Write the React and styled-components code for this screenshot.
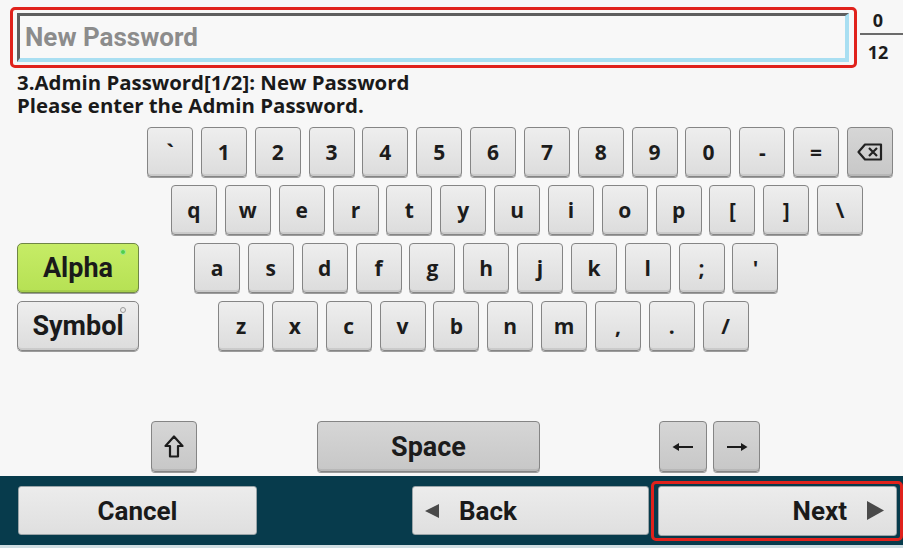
import React from 'react';
import styled, { createGlobalStyle } from 'styled-components';

const GlobalStyle = createGlobalStyle`
  html, body {
    margin: 0;
    padding: 0;
    background: #f7f7f7;
  }
  body {
    font-family: Roboto, 'Liberation Sans', sans-serif;
    color: #1c1c1c;
  }
`;

const Screen = styled.div`
  width: 903px;
  height: 548px;
  background: #f7f7f7;
  display: flex;
  flex-direction: column;
  overflow: hidden;
`;

const Header = styled.div`
  display: flex;
  align-items: flex-start;
  margin-top: 7px;
  padding-left: 10px;
`;

const FocusRing = styled.div`
  width: 847px;
  height: 61px;
  box-sizing: border-box;
  border: 3px solid #e0221c;
  border-radius: 5px;
  padding: 3px 5px 3px 4px;
`;

const Field = styled.div`
  height: 100%;
  box-sizing: border-box;
  background: #f8f8f8;
  border-top: 3px solid #5e5e5e;
  border-left: 3px solid #5e5e5e;
  border-right: 4px solid #a9dff2;
  border-bottom: 4px solid #a9dff2;
  display: flex;
  align-items: center;
  padding-left: 5px;
  font-weight: 700;
  font-size: 26px;
  color: #8c8c8c;
`;

const Counter = styled.div`
  width: 43px;
  margin-left: 3px;
  padding-top: 3px;
  padding-right: 7px;
  box-sizing: border-box;
  display: flex;
  flex-direction: column;
  align-items: center;
  font-family: 'Open Sans', Roboto, sans-serif;
  font-weight: 700;
  font-size: 18px;
  line-height: 20px;
`;

const Divider = styled.div`
  align-self: stretch;
  height: 1.5px;
  background: #6a6a6a;
  margin: 3px -7px 7px 0;
`;

const Info = styled.div`
  margin-top: 3px;
  padding-left: 17px;
  font-family: 'Open Sans', Roboto, sans-serif;
  font-weight: 700;
  font-size: 20.4px;
  line-height: 23px;
  color: #1a1a1a;
`;

const Keyboard = styled.div`
  margin-top: 10px;
  padding-left: 17px;
  display: flex;
  flex-direction: column;
  gap: 8px;
`;

const Row = styled.div`
  display: flex;
  height: 50px;
`;

const ModeSlot = styled.div`
  width: 122px;
  flex-shrink: 0;
`;

const KeyGroup = styled.div`
  display: flex;
  gap: 7.85px;
  margin-left: ${p => p.$indent}px;
`;

const Key = styled.div`
  width: ${p => p.$w || 46}px;
  height: 100%;
  box-sizing: border-box;
  flex-shrink: 0;
  border: 1px solid #858585;
  border-radius: 4px;
  background: ${p => p.$dark
    ? 'linear-gradient(#d6d6d6, #c7c7c7)'
    : 'linear-gradient(#eeeeee, #dcdcdc)'};
  box-shadow: inset 0 -2px 0 rgba(0, 0, 0, 0.08), 0 1px 0 #9c9c9c;
  display: flex;
  align-items: center;
  justify-content: center;
  font-family: 'Open Sans', 'DejaVu Sans', sans-serif;
  font-weight: 700;
  font-size: 21px;
  color: #1c1c1c;
`;

const ModeButton = styled.div`
  position: relative;
  width: 122px;
  height: 50px;
  box-sizing: border-box;
  border: 1px solid ${p => p.$active ? '#6f8646' : '#858585'};
  border-radius: 5px;
  background: ${p => p.$active
    ? 'linear-gradient(#c6ec66, #b6e154)'
    : 'linear-gradient(#eeeeee, #dcdcdc)'};
  box-shadow: inset 0 -2px 0 rgba(0, 0, 0, 0.08), 0 1px 0 #9c9c9c;
  display: flex;
  align-items: center;
  justify-content: center;
  font-weight: 700;
  font-size: 27px;
  color: #1a1a1a;
`;

const ModeDot = styled.span`
  position: absolute;
  top: 5px;
  right: 12px;
  width: 6px;
  height: 6px;
  border-radius: 50%;
  box-sizing: border-box;
  background: ${p => p.$on ? '#4fd04a' : 'transparent'};
  border: 1.5px solid ${p => p.$on ? '#a5e79a' : '#9a9a9a'};
`;

const FunctionRow = styled.div`
  display: flex;
  height: 51px;
  margin-top: 70px;
  padding-left: 151px;
`;

const Spaced = styled.div`
  display: flex;
  margin-left: ${p => p.$gap}px;
  gap: 6px;
`;

const SpaceKey = styled(Key)`
  font-family: Roboto, 'Liberation Sans', sans-serif;
  font-size: 27px;
`;

const BottomBar = styled.div`
  margin-top: 4px;
  height: 69px;
  background: #073b4c;
  border-bottom: 3px solid #cfdde2;
  display: flex;
  align-items: center;
  padding-left: 18px;
`;

const BarButton = styled.div`
  width: ${p => p.$w}px;
  height: ${p => p.$h || 49}px;
  box-sizing: border-box;
  border: 1px solid #9aa4a8;
  border-radius: 3px;
  background: linear-gradient(#ececec, #dfdfdf);
  display: flex;
  align-items: center;
  justify-content: ${p => p.$align || 'center'};
  gap: 20px;
  padding: 0 12px;
  font-weight: 700;
  font-size: 26px;
  color: #1a1a1a;
  flex-shrink: 0;
`;

const Grow = styled.div`
  flex: 1;
`;

const NextRing = styled.div`
  width: 252px;
  height: 60px;
  margin-left: 2px;
  box-sizing: border-box;
  border: 3px solid #e0221c;
  border-radius: 5px;
  padding: 2px 3px 2px 4px;
  display: flex;
  flex-shrink: 0;
`;

const BackspaceIcon = () => (
  <svg width="26" height="20" viewBox="0 0 26 20">
    <path d="M8 2.5 H24 V17.5 H8 L1.5 10 Z" fill="none" stroke="#222" strokeWidth="2.2" strokeLinejoin="round" />
    <path d="M12 6 L20 14 M20 6 L12 14" stroke="#222" strokeWidth="2.2" />
  </svg>
);

const ShiftIcon = () => (
  <svg width="20" height="23" viewBox="0 0 20 23">
    <path d="M10 1.5 L18.5 11 H14 V21.5 H6 V11 H1.5 Z" fill="none" stroke="#1c1c1c" strokeWidth="2.2" strokeLinejoin="round" />
  </svg>
);

const ArrowIcon = ({ dir }) => (
  <svg width="22" height="10" viewBox="0 0 22 10" style={{ transform: dir === 'right' ? 'scaleX(-1)' : 'none' }}>
    <path d="M5 5 H21" stroke="#1c1c1c" strokeWidth="2" />
    <path d="M0.5 5 L7 1 V9 Z" fill="#1c1c1c" />
  </svg>
);

const Triangle = ({ dir, w, h }) => (
  <svg width={w} height={h} viewBox={`0 0 ${w} ${h}`}>
    {dir === 'left'
      ? <path d={`M0 ${h / 2} L${w} 0 V${h} Z`} fill="#4a4a4a" />
      : <path d={`M0 0 L${w} ${h / 2} L0 ${h} Z`} fill="#4a4a4a" />}
  </svg>
);

const rows = [
  { indent: 8, keys: ['`', '1', '2', '3', '4', '5', '6', '7', '8', '9', '0', '-', '='], backspace: true },
  { indent: 32, keys: ['q', 'w', 'e', 'r', 't', 'y', 'u', 'i', 'o', 'p', '[', ']', '\\'] },
  { indent: 55, keys: ['a', 's', 'd', 'f', 'g', 'h', 'j', 'k', 'l', ';', "'"], mode: 'Alpha' },
  { indent: 79, keys: ['z', 'x', 'c', 'v', 'b', 'n', 'm', ',', '.', '/'], mode: 'Symbol' },
];

export default function App() {
  return (
    <Screen>
      <GlobalStyle />
      <Header>
        <FocusRing>
          <Field>New Password</Field>
        </FocusRing>
        <Counter>
          <span>0</span>
          <Divider />
          <span>12</span>
        </Counter>
      </Header>

      <Info>
        <div>3.Admin Password[1/2]: New Password</div>
        <div>Please enter the Admin Password.</div>
      </Info>

      <Keyboard>
        {rows.map((row, i) => (
          <Row key={i}>
            <ModeSlot>
              {row.mode && (
                <ModeButton $active={row.mode === 'Alpha'}>
                  {row.mode}
                  <ModeDot $on={row.mode === 'Alpha'} />
                </ModeButton>
              )}
            </ModeSlot>
            <KeyGroup $indent={row.indent}>
              {row.keys.map(k => <Key key={k}>{k}</Key>)}
              {row.backspace && <Key $dark><BackspaceIcon /></Key>}
            </KeyGroup>
          </Row>
        ))}
      </Keyboard>

      <FunctionRow>
        <Key $dark><ShiftIcon /></Key>
        <Spaced $gap={120}>
          <SpaceKey $dark $w={223}>Space</SpaceKey>
        </Spaced>
        <Spaced $gap={119}>
          <Key $dark $w={48}><ArrowIcon dir="left" /></Key>
          <Key $dark $w={47}><ArrowIcon dir="right" /></Key>
        </Spaced>
      </FunctionRow>

      <BottomBar>
        <BarButton $w={239}>Cancel</BarButton>
        <Grow />
        <BarButton $w={237} $align="flex-start">
          <Triangle dir="left" w={14} h={14} />
          <span>Back</span>
        </BarButton>
        <NextRing>
          <BarButton $w={239} $h={50} $align="flex-end">
            <span>Next</span>
            <Triangle dir="right" w={17} h={19} />
          </BarButton>
        </NextRing>
      </BottomBar>
    </Screen>
  );
}
